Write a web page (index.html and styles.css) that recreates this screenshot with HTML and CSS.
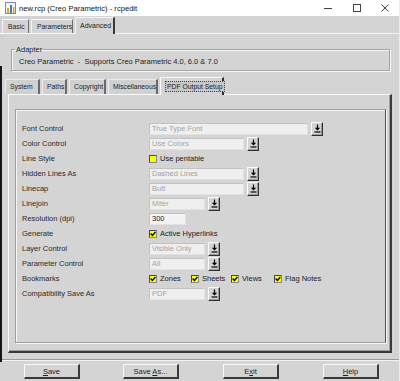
FILE: index.html
```html
<!DOCTYPE html>
<html>
<head>
<meta charset="utf-8">
<link rel="stylesheet" href="styles.css">
</head>
<body>
<div class="win">
  <div class="titlebar">
    <svg class="appicon" width="11" height="12" viewBox="0 0 11 12">
      <rect x="0.5" y="0.5" width="10" height="11" fill="#f4f4f4" stroke="#7a8aa8"/>
      <rect x="2" y="6" width="2" height="5" fill="#e9a21a"/>
      <rect x="5" y="3" width="2" height="8" fill="#3a78c8"/>
      <rect x="8" y="5" width="1.5" height="6" fill="#e9a21a"/>
    </svg>
    <span class="title">new.rcp (Creo Parametric) - rcpedit</span>
    <div class="controls">
      <svg class="ctl" width="28" height="16" viewBox="0 0 28 16"><path d="M9 8.5h8" stroke="#444" stroke-width="1"/></svg>
      <svg class="ctl" width="28" height="16" viewBox="0 0 28 16"><rect x="10.5" y="4.5" width="7" height="7" fill="none" stroke="#444"/></svg>
      <svg class="ctl" width="28" height="16" viewBox="0 0 28 16"><path d="M10.5 4.5l7 7M17.5 4.5l-7 7" stroke="#444" stroke-width="1"/></svg>
    </div>
  </div>

  <div class="toptabs">
    <div class="ttab t-basic">Basic</div>
    <div class="ttab t-params">Parameters</div>
    <div class="ttab t-adv sel">Advanced</div>
  </div>

  <div class="main">
    <fieldset class="adapter">
      <legend>Adapter</legend>
      <div class="adapter-text">Creo Parametric &nbsp;- &nbsp;Supports Creo Parametric 4.0, 6.0 &amp; 7.0</div>
    </fieldset>

    <div class="subtabs">
      <div class="stab w-sys">System</div>
      <div class="stab w-paths">Paths</div>
      <div class="stab w-copy">Copyright</div>
      <div class="stab w-misc">Miscellaneous</div>
      <div class="stab w-pdf sel"><span class="focus">PDF Output Setup</span></div>
    </div>

    <div class="panel">
      <div class="inner">
        <div class="row">
          <span class="label">Font Control</span>
          <span class="field w-long">True Type Font</span>
          <span class="drop"><svg width="7" height="9" viewBox="0 0 7 9"><path d="M3.5 0.5v4" stroke="#000" stroke-width="1.2"/><path d="M0.8 3.8h5.4L3.5 6.6z" fill="#000"/><path d="M0.5 8h6" stroke="#000" stroke-width="1.2"/></svg></span>
        </div>
        <div class="row">
          <span class="label">Color Control</span>
          <span class="field w-mid">Use Colors</span>
          <span class="drop"><svg width="7" height="9" viewBox="0 0 7 9"><path d="M3.5 0.5v4" stroke="#000" stroke-width="1.2"/><path d="M0.8 3.8h5.4L3.5 6.6z" fill="#000"/><path d="M0.5 8h6" stroke="#000" stroke-width="1.2"/></svg></span>
        </div>
        <div class="row">
          <span class="label">Line Style</span>
          <span class="check"></span><span class="ctext">Use pentable</span>
        </div>
        <div class="row">
          <span class="label">Hidden Lines As</span>
          <span class="field w-mid">Dashed Lines</span>
          <span class="drop"><svg width="7" height="9" viewBox="0 0 7 9"><path d="M3.5 0.5v4" stroke="#000" stroke-width="1.2"/><path d="M0.8 3.8h5.4L3.5 6.6z" fill="#000"/><path d="M0.5 8h6" stroke="#000" stroke-width="1.2"/></svg></span>
        </div>
        <div class="row">
          <span class="label">Linecap</span>
          <span class="field w-mid">Butt</span>
          <span class="drop"><svg width="7" height="9" viewBox="0 0 7 9"><path d="M3.5 0.5v4" stroke="#000" stroke-width="1.2"/><path d="M0.8 3.8h5.4L3.5 6.6z" fill="#000"/><path d="M0.5 8h6" stroke="#000" stroke-width="1.2"/></svg></span>
        </div>
        <div class="row">
          <span class="label">Linejoin</span>
          <span class="field w-short">Miter</span>
          <span class="drop"><svg width="7" height="9" viewBox="0 0 7 9"><path d="M3.5 0.5v4" stroke="#000" stroke-width="1.2"/><path d="M0.8 3.8h5.4L3.5 6.6z" fill="#000"/><path d="M0.5 8h6" stroke="#000" stroke-width="1.2"/></svg></span>
        </div>
        <div class="row">
          <span class="label">Resolution (dpi)</span>
          <span class="field w-res entry">300</span>
        </div>
        <div class="row">
          <span class="label">Generate</span>
          <span class="check on"><svg width="6" height="6" viewBox="0 0 6 6"><path d="M0.6 2.6l1.8 1.9L5.4 1" fill="none" stroke="#000" stroke-width="1.4"/></svg></span><span class="ctext">Active Hyperlinks</span>
        </div>
        <div class="row">
          <span class="label">Layer Control</span>
          <span class="field w-short">Visible Only</span>
          <span class="drop"><svg width="7" height="9" viewBox="0 0 7 9"><path d="M3.5 0.5v4" stroke="#000" stroke-width="1.2"/><path d="M0.8 3.8h5.4L3.5 6.6z" fill="#000"/><path d="M0.5 8h6" stroke="#000" stroke-width="1.2"/></svg></span>
        </div>
        <div class="row">
          <span class="label">Parameter Control</span>
          <span class="field w-short">All</span>
          <span class="drop"><svg width="7" height="9" viewBox="0 0 7 9"><path d="M3.5 0.5v4" stroke="#000" stroke-width="1.2"/><path d="M0.8 3.8h5.4L3.5 6.6z" fill="#000"/><path d="M0.5 8h6" stroke="#000" stroke-width="1.2"/></svg></span>
        </div>
        <div class="row">
          <span class="label">Bookmarks</span>
          <span class="bm bm-zones"><span class="check on"><svg width="6" height="6" viewBox="0 0 6 6"><path d="M0.6 2.6l1.8 1.9L5.4 1" fill="none" stroke="#000" stroke-width="1.4"/></svg></span><span class="ctext">Zones</span></span>
          <span class="bm bm-sheets"><span class="check on"><svg width="6" height="6" viewBox="0 0 6 6"><path d="M0.6 2.6l1.8 1.9L5.4 1" fill="none" stroke="#000" stroke-width="1.4"/></svg></span><span class="ctext">Sheets</span></span>
          <span class="bm bm-views"><span class="check on"><svg width="6" height="6" viewBox="0 0 6 6"><path d="M0.6 2.6l1.8 1.9L5.4 1" fill="none" stroke="#000" stroke-width="1.4"/></svg></span><span class="ctext">Views</span></span>
          <span class="bm"><span class="check on"><svg width="6" height="6" viewBox="0 0 6 6"><path d="M0.6 2.6l1.8 1.9L5.4 1" fill="none" stroke="#000" stroke-width="1.4"/></svg></span><span class="ctext">Flag Notes</span></span>
        </div>
        <div class="row">
          <span class="label">Compatibility Save As</span>
          <span class="field w-short">PDF</span>
          <span class="drop"><svg width="7" height="9" viewBox="0 0 7 9"><path d="M3.5 0.5v4" stroke="#000" stroke-width="1.2"/><path d="M0.8 3.8h5.4L3.5 6.6z" fill="#000"/><path d="M0.5 8h6" stroke="#000" stroke-width="1.2"/></svg></span>
        </div>
      </div>
    </div>
  </div>

  <div class="footer">
    <div class="bcell"><button class="btn"><u>S</u>ave</button></div>
    <div class="bcell"><button class="btn">Save <u>A</u>s...</button></div>
    <div class="bcell"><button class="btn">E<u>x</u>it</button></div>
    <div class="bcell"><button class="btn"><u>H</u>elp</button></div>
  </div>
</div>
</body>
</html>
```

FILE: styles.css
```css
* { box-sizing: border-box; }
html, body { margin: 0; padding: 0; }
body {
  width: 400px;
  height: 381px;
  overflow: hidden;
  background: #d4d4d4;
  font-family: "Liberation Sans", Arial, sans-serif;
  font-size: 7.5px;
  color: #222;
}
.win {
  position: relative;
  width: 400px;
  height: 381px;
  display: flex;
  flex-direction: column;
  background: #d4d4d4;
  border-right: 1px solid #eaeaea;
}
.win::before {
  content: "";
  position: absolute;
  left: 0;
  top: 66px;
  width: 2px;
  height: 296px;
  background: #161616;
  z-index: 3;
}

/* title bar */
.titlebar {
  height: 16px;
  flex: none;
  background: #fff;
  display: flex;
  align-items: center;
  padding-left: 5px;
}
.appicon { flex: none; margin-right: 3px; }
.title { font-size: 7.6px; color: #111; }
.controls { margin-left: auto; display: flex; }
.ctl { display: block; }

/* top tabs */
.toptabs {
  height: 17px;
  flex: none;
  display: flex;
  align-items: flex-end;
  padding-left: 2px;
  gap: 2px;
}
.ttab {
  height: 14px;
  border-top: 1px solid #f4f4f4;
  border-left: 1px solid #f4f4f4;
  border-right: 1px solid #707070;
  padding-left: 5px;
  line-height: 13px;
  font-size: 6.8px;
  color: #222;
  white-space: nowrap;
}
.t-basic { width: 27px; }
.t-params { width: 42px; }
.t-adv { width: 40px; }
.ttab.sel {
  height: 17px;
  line-height: 15px;
  padding-left: 4px;
  font-size: 7px;
  border-right: 2px solid #3a3a3a;
  margin-bottom: -1px;
  background: #d4d4d4;
  position: relative;
  z-index: 1;
}

/* main */
.main {
  flex: none;
  height: 322px;
  border-top: 1px solid #f6f6f6;
  padding: 11px 7px 0 8px;
  display: flex;
  flex-direction: column;
}
.adapter {
  margin: 0 2px 0 3px;
  padding: 0 0 0 7px;
  height: 26px;
  border: 1px solid #a4a4a4;
  box-shadow: inset 1px 1px 0 #f6f6f6, 1px 1px 0 #f6f6f6;
  min-width: 0;
}
.adapter legend {
  padding: 0 1px;
  margin-left: -4px;
  color: #222;
  line-height: 9px;
}
.adapter-text {
  line-height: 10px;
  margin-top: 3px;
  color: #222;
  white-space: nowrap;
}

/* sub tabs */
.subtabs {
  height: 17px;
  margin-top: 6px;
  flex: none;
  display: flex;
  align-items: flex-end;
  gap: 2px;
  margin-left: -3px;
}
.stab {
  height: 15px;
  border-top: 1px solid #ececec;
  border-left: 1px solid #ececec;
  border-right: 2px solid #6a6a6a;
  background: #d0d0d0;
  line-height: 14px;
  padding-left: 4px;
  font-size: 6.8px;
  color: #222;
  white-space: nowrap;
}
.w-sys { width: 35px; }
.w-paths { width: 25px; }
.w-copy { width: 37px; }
.w-misc { width: 50px; }
.w-pdf { width: 64px; }
.stab.sel {
  height: 18px;
  background: #d4d4d4;
  border-top: 1px solid #fafafa;
  border-left: 1px solid #fafafa;
  border-right: 2px solid #303030;
  margin-bottom: -1px;
  padding: 3px 0 0 4px;
  line-height: 9px;
  position: relative;
  z-index: 1;
}
.focus {
  display: inline-block;
  border: 1px dotted #444;
  padding: 0 1px;
  line-height: 9px;
  background: #c8c8c8;
}

/* panel */
.panel {
  flex: none;
  height: 259px;
  border-top: 1px solid #fafafa;
  border-left: 1px solid #fafafa;
  border-right: 2px solid #3a3a3a;
  border-bottom: 2px solid #3a3a3a;
  box-shadow: inset -1px -1px 0 #9e9e9e;
  padding: 14px 4px 0 6px;
}
.inner {
  height: 234px;
  border: 1px solid #9e9e9e;
  border-right-color: #505050;
  box-shadow: inset 1px 1px 0 #f6f6f6, 1px 1px 0 #f6f6f6;
  padding: 11px 0 0 6px;
}
.row {
  height: 15px;
  display: flex;
  align-items: center;
}
.label {
  width: 127px;
  flex: none;
  color: #2a2a2a;
  white-space: nowrap;
}
.field {
  height: 12px;
  background: #efefef;
  border: 1px solid #e2e2e2;
  border-top-color: #c2c2c2;
  border-left-color: #c2c2c2;
  color: #a4a4a4;
  line-height: 10px;
  padding-left: 2px;
  white-space: nowrap;
  overflow: hidden;
}
.field.entry { color: #222; background: #f2f2f2; }
.w-long { width: 159px; }
.w-mid { width: 95px; }
.w-short { width: 56px; }
.w-res { width: 37px; }
.drop {
  width: 12px;
  height: 14px;
  margin-left: 3px;
  display: flex;
  align-items: center;
  justify-content: center;
  background: #d4d4d4;
  border-top: 1px solid #fafafa;
  border-left: 1px solid #fafafa;
  border-right: 1px solid #303030;
  border-bottom: 1px solid #303030;
  box-shadow: inset -1px -1px 0 #9a9a9a;
}
.drop svg { display: block; }
.check {
  width: 8px;
  height: 8px;
  flex: none;
  background: #ffff00;
  border: 1px solid #4a4a4a;
  border-right-color: #888;
  border-bottom-color: #888;
  display: flex;
  align-items: center;
  justify-content: center;
}
.check svg { display: block; }
.ctext {
  margin-left: 3px;
  color: #1a1a1a;
  white-space: nowrap;
}
.bm { display: flex; align-items: center; }
.bm-zones { width: 42px; }
.bm-sheets { width: 40px; }
.bm-views { width: 43px; }

/* footer */
.footer {
  flex: 1;
  border-top: 1px solid #9a9a9a;
  box-shadow: inset 0 1px 0 #f2f2f2;
  margin-top: 4px;
  padding-top: 4px;
  display: grid;
  grid-template-columns: repeat(4, 100px);
  align-items: start;
}
.bcell { padding-left: 24px; }
.bcell:nth-child(n+2) { padding-left: 23px; }
.btn {
  width: 56px;
  height: 15px;
  padding: 0;
  font-family: "Liberation Sans", Arial, sans-serif;
  font-size: 7.5px;
  color: #222;
  background: #d4d4d4;
  border-top: 1px solid #fafafa;
  border-left: 1px solid #fafafa;
  border-right: 2px solid #3a3a3a;
  border-bottom: 2px solid #3a3a3a;
  line-height: 11px;
}
```
